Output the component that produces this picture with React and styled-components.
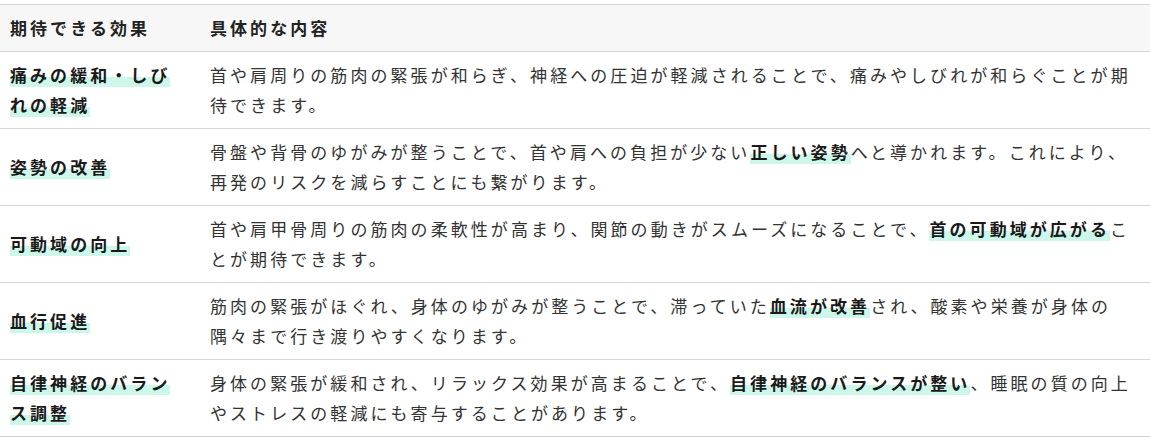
import styled, { createGlobalStyle } from "styled-components";

const GlobalStyle = createGlobalStyle`
  body {
    margin: 0;
    background: #ffffff;
    font-family: "Noto Sans CJK JP", "Noto Sans", sans-serif;
    color: #333333;
  }
`;

const rows = [
  {
    effect: "痛みの緩和・しびれの軽減",
    detail: [
      "首や肩周りの筋肉の緊張が和らぎ、神経への圧迫が軽減されることで、痛みやしびれが和らぐことが期待できます。",
    ],
  },
  {
    effect: "姿勢の改善",
    detail: [
      "骨盤や背骨のゆがみが整うことで、首や肩への負担が少ない",
      { mark: "正しい姿勢" },
      "へと導かれます。これにより、再発のリスクを減らすことにも繋がります。",
    ],
  },
  {
    effect: "可動域の向上",
    detail: [
      "首や肩甲骨周りの筋肉の柔軟性が高まり、関節の動きがスムーズになることで、",
      { mark: "首の可動域が広がる" },
      "ことが期待できます。",
    ],
  },
  {
    effect: "血行促進",
    detail: [
      "筋肉の緊張がほぐれ、身体のゆがみが整うことで、滞っていた",
      { mark: "血流が改善" },
      "され、酸素や栄養が身体の隅々まで行き渡りやすくなります。",
    ],
  },
  {
    effect: "自律神経のバランス調整",
    detail: [
      "身体の緊張が緩和され、リラックス効果が高まることで、",
      { mark: "自律神経のバランスが整い" },
      "、睡眠の質の向上やストレスの軽減にも寄与することがあります。",
    ],
  },
];

export default function App() {
  return (
    <>
      <GlobalStyle />
      <Wrapper>
        <Table>
          <colgroup>
            <col style={{ width: "200px" }} />
            <col />
          </colgroup>
          <thead>
            <tr>
              <Th>期待できる効果</Th>
              <Th>具体的な内容</Th>
            </tr>
          </thead>
          <tbody>
            {rows.map((row) => (
              <tr key={row.effect}>
                <Td>
                  <Mark>{row.effect}</Mark>
                </Td>
                <Td>
                  {row.detail.map((part, i) =>
                    typeof part === "string" ? (
                      <span key={i}>{part}</span>
                    ) : (
                      <Mark key={i}>{part.mark}</Mark>
                    )
                  )}
                </Td>
              </tr>
            ))}
          </tbody>
        </Table>
      </Wrapper>
    </>
  );
}

const Wrapper = styled.div`
  padding-top: 4px;
  width: 1150px;
`;

const Table = styled.table`
  width: 100%;
  border-collapse: collapse;
  table-layout: fixed;
  font-size: 17px;
  line-height: 30px;
  letter-spacing: 0.18em;
`;

const Th = styled.th`
  background: #f7f7f7;
  border-top: 1px solid #d4d4d4;
  border-bottom: 1px solid #d4d4d4;
  padding: 8px 10px;
  text-align: left;
  font-weight: 700;
  color: #222222;
`;

const Td = styled.td`
  border-bottom: 1px solid #d4d4d4;
  padding: 8px 10px;
  vertical-align: middle;
`;

const Mark = styled.strong`
  font-weight: 700;
  color: #1a1a1a;
  background: linear-gradient(transparent 60%, #cdf7ea 60%);
`;
